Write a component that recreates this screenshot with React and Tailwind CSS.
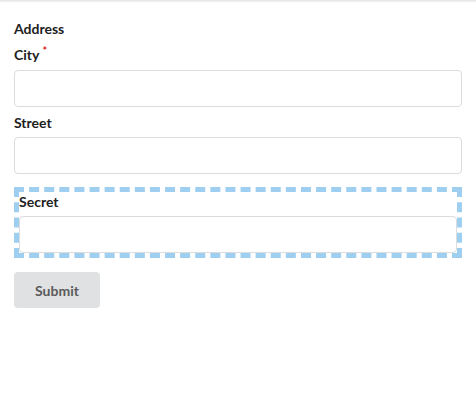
import React from 'react';

const Label = ({ children, required }) => (
  <label className="block text-[14px] leading-[20px] font-bold text-[#212121]">
    {children}
    {required && <span className="relative -top-[5px] ml-[3px] text-[11px] text-[#db2828]">*</span>}
  </label>
);

const Input = () => (
  <input
    type="text"
    className="block w-full h-[37px] mt-[4px] px-[14px] rounded-[4px] border border-[#dcdcdc] bg-white text-[14px] outline-none"
  />
);

const App = () => (
  <div className="min-h-[394px] bg-white font-['Lato','Liberation_Sans',sans-serif]">
    <div className="h-[3px] bg-gradient-to-b from-[#e4e4e4] to-white" />
    <form className="px-[14px] pt-[16px] flex flex-col" onSubmit={(e) => e.preventDefault()}>
      <Label>Address</Label>
      <div className="mt-[6px]">
        <Label required>City</Label>
        <Input />
      </div>
      <div className="mt-[6px]">
        <Label>Street</Label>
        <Input />
      </div>
      <div className="mt-[13px] border-[5px] border-dashed border-[#9fcff0]">
        <Label>Secret</Label>
        <Input />
      </div>
      <div className="mt-[14px]">
        <button
          type="submit"
          className="h-[36px] w-[86px] rounded-[4px] bg-[#e0e1e2] text-[14px] font-bold text-[#5a5a5a]"
        >
          Submit
        </button>
      </div>
    </form>
  </div>
);

export default App;
